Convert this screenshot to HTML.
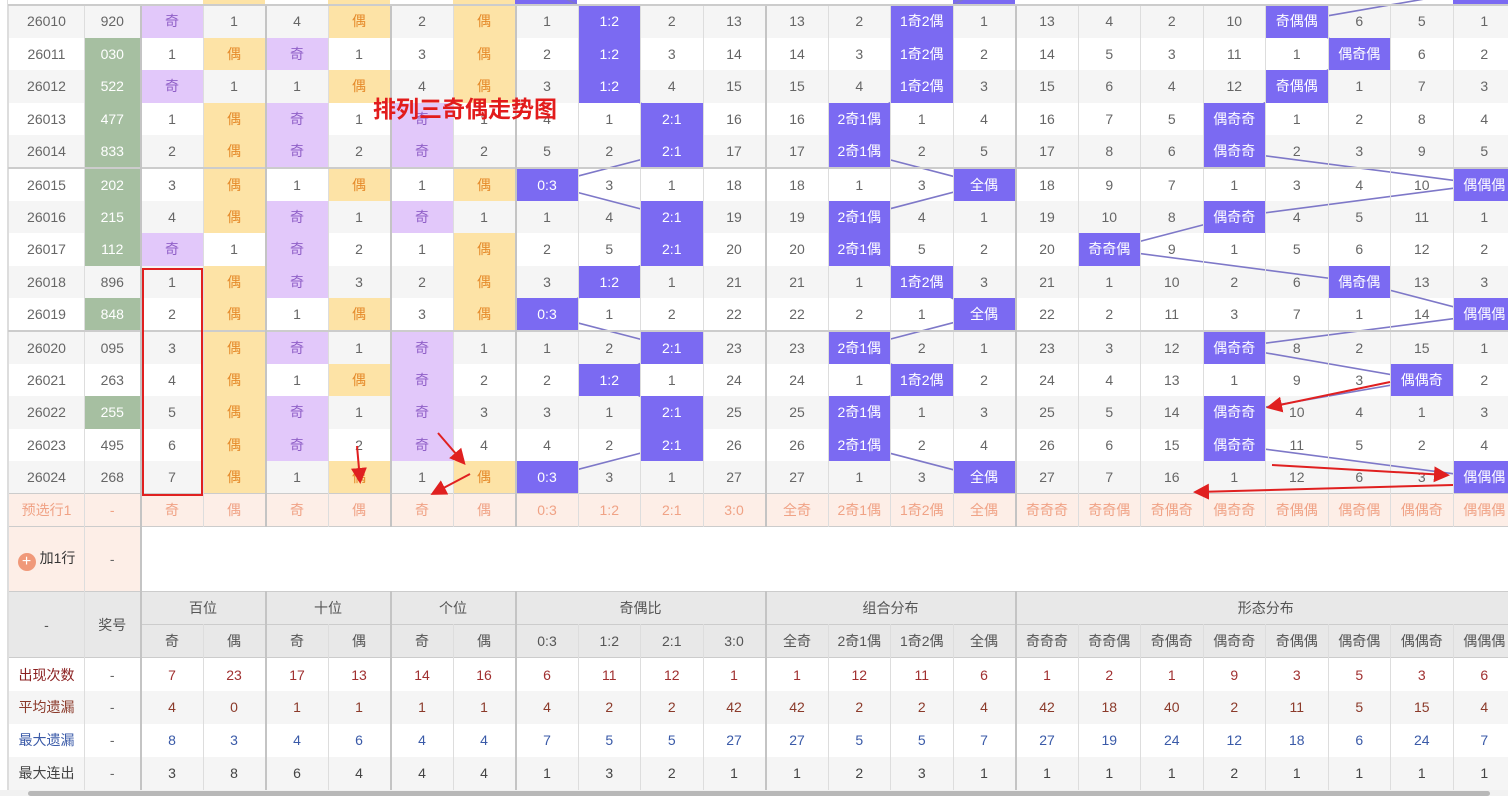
<!DOCTYPE html>
<html><head><meta charset="utf-8"><style>
*{margin:0;padding:0;box-sizing:border-box}
body{width:1508px;height:796px;overflow:hidden;background:#fff;position:relative;font-family:"Liberation Sans","Noto Sans CJK SC",sans-serif;font-size:14px;color:#666}
.stripe{position:absolute;left:8px;width:1510px;background:#f5f5f5}
table{position:absolute;left:8px;top:5px;border-collapse:collapse;table-layout:fixed;width:1507px;z-index:3}
td{text-align:center;border-left:1px solid #ddd;border-right:1px solid #ddd;border-top:0;border-bottom:0;height:32.6px;padding:0;white-space:nowrap;overflow:hidden}
tr.d td:nth-child(2),tr.d td:nth-child(4),tr.d td:nth-child(6),tr.d td:nth-child(8),tr.d td:nth-child(12),tr.d td:nth-child(16){border-right:2px solid #c4c4c4}
tr.sep td{border-top:2px solid #ccc}
.q{background:#e2c8fa;color:#9060c8}
.o{background:#fde3a6;color:#e58a2a}
.b{background:#7b6af2;color:#fff}
.g{background:#a6bfa1;color:#fff}
tr.p td{background:#fdeee7;color:#f0a285;height:33px;border-top:1px solid #ccc}
tr.a td{height:65px;border-top:1px solid #ccc}
tr.h td{background:#e8e8e8;color:#555;height:33px;border-top:1px solid #ccc}
tr.s td{height:33px}
.gb{border-right:2px solid #c4c4c4 !important}
.c1{color:#a03030}.c2{color:#8b3a2a}.c3{color:#3a5aa8}.c4{color:#444}
svg{position:absolute;left:0;top:0}
</style></head><body>
<div class="stripe" style="top:5px;height:32.6px"></div>
<div class="stripe" style="top:70.2px;height:32.6px"></div>
<div class="stripe" style="top:135.4px;height:32.6px"></div>
<div class="stripe" style="top:200.6px;height:32.6px"></div>
<div class="stripe" style="top:265.8px;height:32.6px"></div>
<div class="stripe" style="top:331px;height:32.6px"></div>
<div class="stripe" style="top:396.2px;height:32.6px"></div>
<div class="stripe" style="top:461.4px;height:32.6px"></div>
<div class="stripe" style="top:691px;height:33px"></div>
<div class="stripe" style="top:757px;height:33px"></div>
<div style="position:absolute;top:0;left:203px;width:62px;height:5px;background:#fde3a6"></div>
<div style="position:absolute;top:0;left:328px;width:62px;height:5px;background:#fde3a6"></div>
<div style="position:absolute;top:0;left:453px;width:62px;height:5px;background:#fde3a6"></div>
<div style="position:absolute;top:0;left:515px;width:62px;height:5px;background:#7b6af2"></div>
<div style="position:absolute;top:0;left:953px;width:62px;height:5px;background:#7b6af2"></div>
<div style="position:absolute;top:0;left:1453px;width:62px;height:5px;background:#7b6af2"></div>
<div style="position:absolute;top:4px;left:8px;width:1510px;height:2px;background:#ccc;z-index:4"></div>
<svg width="1508" height="796" style="z-index:2" fill="none" stroke="#7e78c8" stroke-width="1.6">
<polyline points="546.25,-11.3 608.75,21.3 608.75,53.9 608.75,86.5 671.25,119.1 671.25,151.7 546.25,184.3 671.25,216.9 671.25,249.5 608.75,282.1 546.25,314.7 671.25,347.3 608.75,379.9 671.25,412.5 671.25,445.1 546.25,477.7"/>
<polyline points="983.75,-11.3 921.25,21.3 921.25,53.9 921.25,86.5 858.75,119.1 858.75,151.7 983.75,184.3 858.75,216.9 858.75,249.5 921.25,282.1 983.75,314.7 858.75,347.3 921.25,379.9 858.75,412.5 858.75,445.1 983.75,477.7"/>
<polyline points="1483.75,-11.3 1296.25,21.3 1358.75,53.9 1296.25,86.5 1233.75,119.1 1233.75,151.7 1483.75,184.3 1233.75,216.9 1108.75,249.5 1358.75,282.1 1483.75,314.7 1233.75,347.3 1421.25,379.9 1233.75,412.5 1233.75,445.1 1483.75,477.7"/>
</svg>
<table>
<colgroup><col style="width:76px"><col style="width:56px"><col span="22" style="width:62.5px"></colgroup>
<tr class="d"><td>26010</td><td>920</td><td class="q">奇</td><td>1</td><td>4</td><td class="o">偶</td><td>2</td><td class="o">偶</td><td>1</td><td class="b">1:2</td><td>2</td><td>13</td><td>13</td><td>2</td><td class="b">1奇2偶</td><td>1</td><td>13</td><td>4</td><td>2</td><td>10</td><td class="b">奇偶偶</td><td>6</td><td>5</td><td>1</td></tr>
<tr class="d"><td>26011</td><td class="g">030</td><td>1</td><td class="o">偶</td><td class="q">奇</td><td>1</td><td>3</td><td class="o">偶</td><td>2</td><td class="b">1:2</td><td>3</td><td>14</td><td>14</td><td>3</td><td class="b">1奇2偶</td><td>2</td><td>14</td><td>5</td><td>3</td><td>11</td><td>1</td><td class="b">偶奇偶</td><td>6</td><td>2</td></tr>
<tr class="d"><td>26012</td><td class="g">522</td><td class="q">奇</td><td>1</td><td>1</td><td class="o">偶</td><td>4</td><td class="o">偶</td><td>3</td><td class="b">1:2</td><td>4</td><td>15</td><td>15</td><td>4</td><td class="b">1奇2偶</td><td>3</td><td>15</td><td>6</td><td>4</td><td>12</td><td class="b">奇偶偶</td><td>1</td><td>7</td><td>3</td></tr>
<tr class="d"><td>26013</td><td class="g">477</td><td>1</td><td class="o">偶</td><td class="q">奇</td><td>1</td><td class="q">奇</td><td>1</td><td>4</td><td>1</td><td class="b">2:1</td><td>16</td><td>16</td><td class="b">2奇1偶</td><td>1</td><td>4</td><td>16</td><td>7</td><td>5</td><td class="b">偶奇奇</td><td>1</td><td>2</td><td>8</td><td>4</td></tr>
<tr class="d"><td>26014</td><td class="g">833</td><td>2</td><td class="o">偶</td><td class="q">奇</td><td>2</td><td class="q">奇</td><td>2</td><td>5</td><td>2</td><td class="b">2:1</td><td>17</td><td>17</td><td class="b">2奇1偶</td><td>2</td><td>5</td><td>17</td><td>8</td><td>6</td><td class="b">偶奇奇</td><td>2</td><td>3</td><td>9</td><td>5</td></tr>
<tr class="d sep"><td>26015</td><td class="g">202</td><td>3</td><td class="o">偶</td><td>1</td><td class="o">偶</td><td>1</td><td class="o">偶</td><td class="b">0:3</td><td>3</td><td>1</td><td>18</td><td>18</td><td>1</td><td>3</td><td class="b">全偶</td><td>18</td><td>9</td><td>7</td><td>1</td><td>3</td><td>4</td><td>10</td><td class="b">偶偶偶</td></tr>
<tr class="d"><td>26016</td><td class="g">215</td><td>4</td><td class="o">偶</td><td class="q">奇</td><td>1</td><td class="q">奇</td><td>1</td><td>1</td><td>4</td><td class="b">2:1</td><td>19</td><td>19</td><td class="b">2奇1偶</td><td>4</td><td>1</td><td>19</td><td>10</td><td>8</td><td class="b">偶奇奇</td><td>4</td><td>5</td><td>11</td><td>1</td></tr>
<tr class="d"><td>26017</td><td class="g">112</td><td class="q">奇</td><td>1</td><td class="q">奇</td><td>2</td><td>1</td><td class="o">偶</td><td>2</td><td>5</td><td class="b">2:1</td><td>20</td><td>20</td><td class="b">2奇1偶</td><td>5</td><td>2</td><td>20</td><td class="b">奇奇偶</td><td>9</td><td>1</td><td>5</td><td>6</td><td>12</td><td>2</td></tr>
<tr class="d"><td>26018</td><td>896</td><td>1</td><td class="o">偶</td><td class="q">奇</td><td>3</td><td>2</td><td class="o">偶</td><td>3</td><td class="b">1:2</td><td>1</td><td>21</td><td>21</td><td>1</td><td class="b">1奇2偶</td><td>3</td><td>21</td><td>1</td><td>10</td><td>2</td><td>6</td><td class="b">偶奇偶</td><td>13</td><td>3</td></tr>
<tr class="d"><td>26019</td><td class="g">848</td><td>2</td><td class="o">偶</td><td>1</td><td class="o">偶</td><td>3</td><td class="o">偶</td><td class="b">0:3</td><td>1</td><td>2</td><td>22</td><td>22</td><td>2</td><td>1</td><td class="b">全偶</td><td>22</td><td>2</td><td>11</td><td>3</td><td>7</td><td>1</td><td>14</td><td class="b">偶偶偶</td></tr>
<tr class="d sep"><td>26020</td><td>095</td><td>3</td><td class="o">偶</td><td class="q">奇</td><td>1</td><td class="q">奇</td><td>1</td><td>1</td><td>2</td><td class="b">2:1</td><td>23</td><td>23</td><td class="b">2奇1偶</td><td>2</td><td>1</td><td>23</td><td>3</td><td>12</td><td class="b">偶奇奇</td><td>8</td><td>2</td><td>15</td><td>1</td></tr>
<tr class="d"><td>26021</td><td>263</td><td>4</td><td class="o">偶</td><td>1</td><td class="o">偶</td><td class="q">奇</td><td>2</td><td>2</td><td class="b">1:2</td><td>1</td><td>24</td><td>24</td><td>1</td><td class="b">1奇2偶</td><td>2</td><td>24</td><td>4</td><td>13</td><td>1</td><td>9</td><td>3</td><td class="b">偶偶奇</td><td>2</td></tr>
<tr class="d"><td>26022</td><td class="g">255</td><td>5</td><td class="o">偶</td><td class="q">奇</td><td>1</td><td class="q">奇</td><td>3</td><td>3</td><td>1</td><td class="b">2:1</td><td>25</td><td>25</td><td class="b">2奇1偶</td><td>1</td><td>3</td><td>25</td><td>5</td><td>14</td><td class="b">偶奇奇</td><td>10</td><td>4</td><td>1</td><td>3</td></tr>
<tr class="d"><td>26023</td><td>495</td><td>6</td><td class="o">偶</td><td class="q">奇</td><td>2</td><td class="q">奇</td><td>4</td><td>4</td><td>2</td><td class="b">2:1</td><td>26</td><td>26</td><td class="b">2奇1偶</td><td>2</td><td>4</td><td>26</td><td>6</td><td>15</td><td class="b">偶奇奇</td><td>11</td><td>5</td><td>2</td><td>4</td></tr>
<tr class="d"><td>26024</td><td>268</td><td>7</td><td class="o">偶</td><td>1</td><td class="o">偶</td><td>1</td><td class="o">偶</td><td class="b">0:3</td><td>3</td><td>1</td><td>27</td><td>27</td><td>1</td><td>3</td><td class="b">全偶</td><td>27</td><td>7</td><td>16</td><td>1</td><td>12</td><td>6</td><td>3</td><td class="b">偶偶偶</td></tr>
<tr class="d p"><td>预选行1</td><td>-</td><td>奇</td><td>偶</td><td>奇</td><td>偶</td><td>奇</td><td>偶</td><td>0:3</td><td>1:2</td><td>2:1</td><td>3:0</td><td>全奇</td><td>2奇1偶</td><td>1奇2偶</td><td>全偶</td><td>奇奇奇</td><td>奇奇偶</td><td>奇偶奇</td><td>偶奇奇</td><td>奇偶偶</td><td>偶奇偶</td><td>偶偶奇</td><td>偶偶偶</td></tr>
<tr class="a"><td style="background:#fdeee7;color:#333"><span style="display:inline-block;width:18px;height:18px;border-radius:50%;background:#f0997a;color:#fff;font-size:16px;line-height:18px;vertical-align:-3px;margin-right:4px">+</span>加1行</td><td style="background:#fdeee7;border-right:2px solid #c4c4c4">-</td><td colspan="22" style="background:#fff"></td></tr>
<tr class="h"><td rowspan="2">-</td><td rowspan="2" class="gb">奖号</td><td colspan="2" class="gb">百位</td><td colspan="2" class="gb">十位</td><td colspan="2" class="gb">个位</td><td colspan="4" class="gb">奇偶比</td><td colspan="4" class="gb">组合分布</td><td colspan="8">形态分布</td></tr>
<tr class="h"><td>奇</td><td class="gb">偶</td><td>奇</td><td class="gb">偶</td><td>奇</td><td class="gb">偶</td><td>0:3</td><td>1:2</td><td>2:1</td><td class="gb">3:0</td><td>全奇</td><td>2奇1偶</td><td>1奇2偶</td><td class="gb">全偶</td><td>奇奇奇</td><td>奇奇偶</td><td>奇偶奇</td><td>偶奇奇</td><td>奇偶偶</td><td>偶奇偶</td><td>偶偶奇</td><td>偶偶偶</td></tr>
<tr class="d s c1" style="border-top:1px solid #ccc"><td style="color:#8b2020">出现次数</td><td style="color:#666">-</td><td>7</td><td>23</td><td>17</td><td>13</td><td>14</td><td>16</td><td>6</td><td>11</td><td>12</td><td>1</td><td>1</td><td>12</td><td>11</td><td>6</td><td>1</td><td>2</td><td>1</td><td>9</td><td>3</td><td>5</td><td>3</td><td>6</td></tr>
<tr class="d s c2"><td>平均遗漏</td><td style="color:#666">-</td><td>4</td><td>0</td><td>1</td><td>1</td><td>1</td><td>1</td><td>4</td><td>2</td><td>2</td><td>42</td><td>42</td><td>2</td><td>2</td><td>4</td><td>42</td><td>18</td><td>40</td><td>2</td><td>11</td><td>5</td><td>15</td><td>4</td></tr>
<tr class="d s c3"><td>最大遗漏</td><td style="color:#666">-</td><td>8</td><td>3</td><td>4</td><td>6</td><td>4</td><td>4</td><td>7</td><td>5</td><td>5</td><td>27</td><td>27</td><td>5</td><td>5</td><td>7</td><td>27</td><td>19</td><td>24</td><td>12</td><td>18</td><td>6</td><td>24</td><td>7</td></tr>
<tr class="d s c4"><td>最大连出</td><td style="color:#666">-</td><td>3</td><td>8</td><td>6</td><td>4</td><td>4</td><td>4</td><td>1</td><td>3</td><td>2</td><td>1</td><td>1</td><td>2</td><td>3</td><td>1</td><td>1</td><td>1</td><td>1</td><td>2</td><td>1</td><td>1</td><td>1</td><td>1</td></tr>
</table>
<div style="position:absolute;left:0;top:0;width:8px;height:796px;background:#fff;border-right:1px solid #ddd;z-index:5"></div>
<div style="position:absolute;left:0;top:790px;width:1508px;height:6px;background:#f1f1f1;z-index:5"></div>
<div style="position:absolute;left:28px;top:791px;width:1462px;height:5px;background:#b8b8b8;border-radius:3px;z-index:6"></div>
<div style="position:absolute;left:142px;top:268px;width:61px;height:228px;border:2px solid #e02020;z-index:7"></div>
<div style="position:absolute;left:373px;top:90px;font-size:23px;font-weight:bold;color:#e21c1c;z-index:7;white-space:nowrap">排列三奇偶走势图</div>
<svg width="1508" height="796" style="z-index:8" stroke="#e02020" stroke-width="2" fill="#e02020">
<defs><marker id="ar" markerWidth="8" markerHeight="8" refX="6" refY="4" orient="auto"><path d="M0,0 L8,4 L0,8 z" stroke="none"/></marker></defs>
<line x1="357" y1="446" x2="360" y2="480" marker-end="url(#ar)"/>
<line x1="438" y1="433" x2="463" y2="462" marker-end="url(#ar)"/>
<line x1="470" y1="474" x2="434" y2="493" marker-end="url(#ar)"/>
<line x1="1390" y1="382" x2="1270" y2="407" marker-end="url(#ar)"/>
<line x1="1272" y1="465" x2="1446" y2="475" marker-end="url(#ar)"/>
<line x1="1453" y1="485" x2="1197" y2="492" marker-end="url(#ar)"/>
</svg>
</body></html>
